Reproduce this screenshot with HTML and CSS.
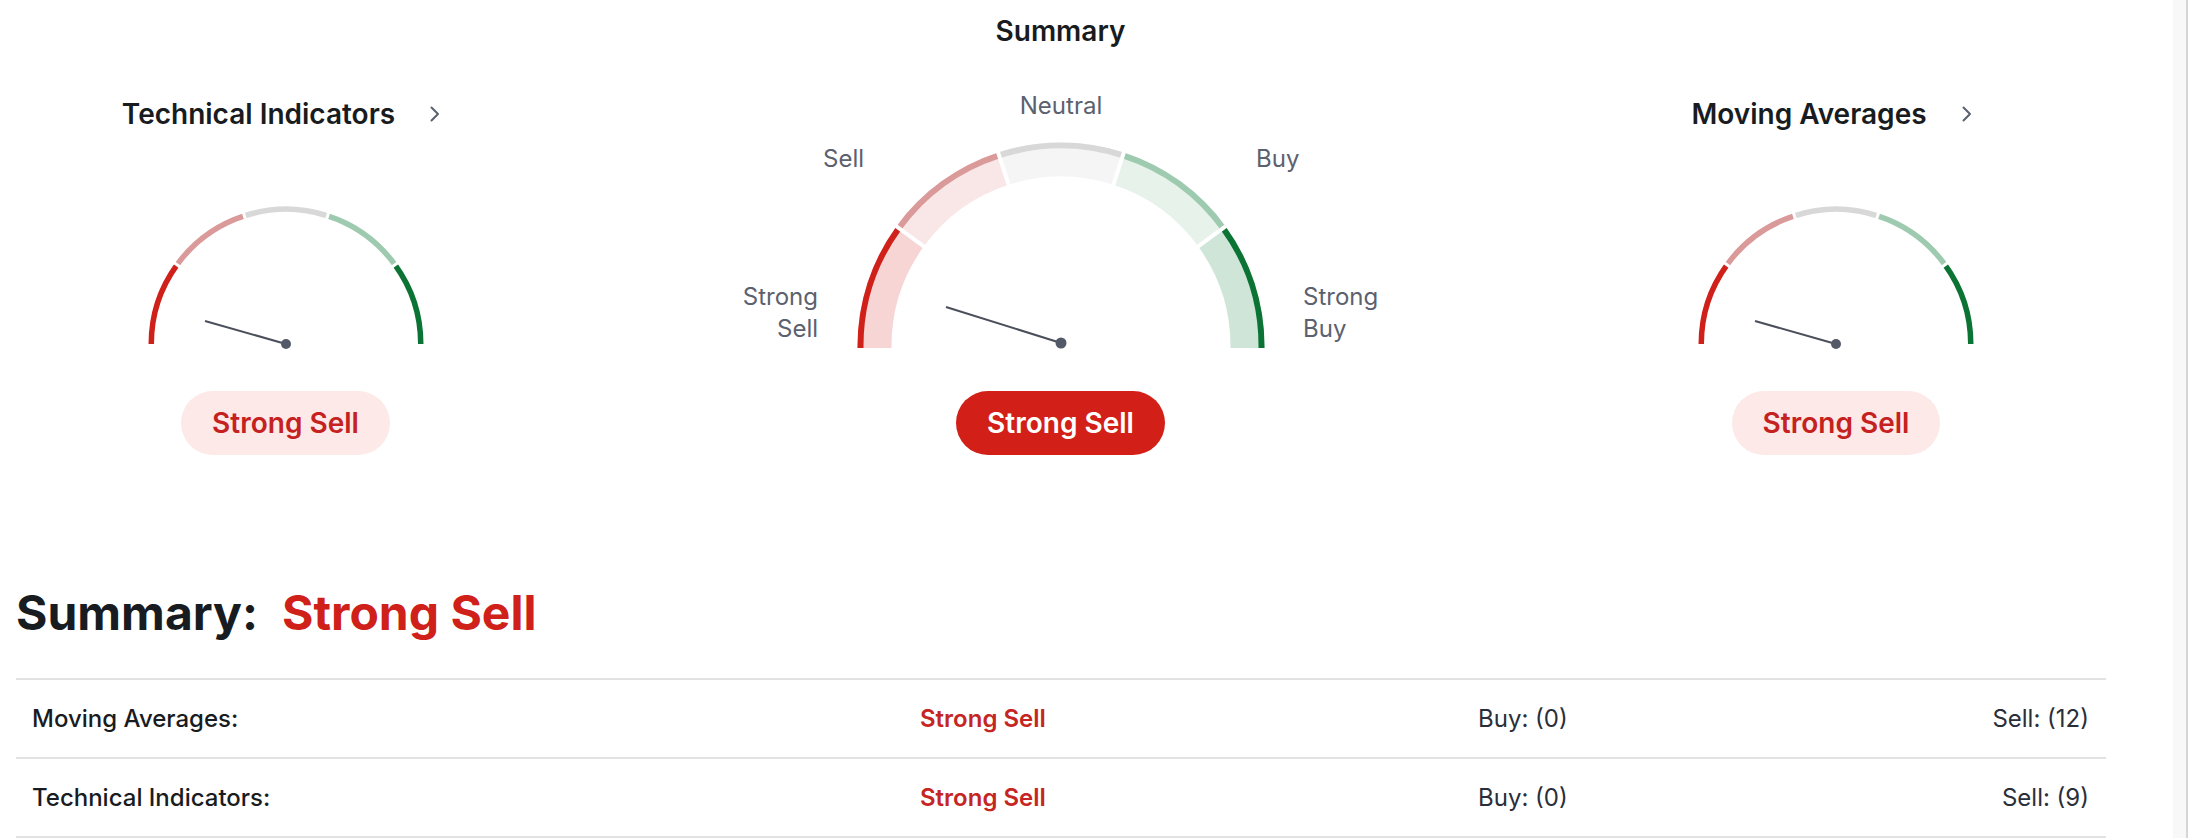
FILE: index.html
```html
<!DOCTYPE html>
<html lang="en">
<head>
  <meta charset="UTF-8">
  <title>Technical Summary</title>
  <link rel="stylesheet" href="styles.css">
</head>
<body>
  <div class="page">
    <section class="gauges">

      <!-- technical indicators -->
      <div class="gauge-card">
        <div class="card-title">
          <span>Technical Indicators</span>
          <svg class="chevron" viewBox="0 0 26 26"><path d="M8.5 6.5 L15 13 L8.5 19.5"/></svg>
        </div>
        <svg class="mini-gauge" viewBox="0 0 290 150">
          <path class="seg s-strong-sell" d="M10.25 142 A134.75 134.75 0 0 1 35.98 62.8"/>
          <path class="seg s-sell" d="M35.98 62.8 A134.75 134.75 0 0 1 103.36 13.84"/>
          <path class="seg s-neutral" d="M103.36 13.84 A134.75 134.75 0 0 1 186.64 13.84"/>
          <path class="seg s-buy" d="M186.64 13.84 A134.75 134.75 0 0 1 254.02 62.8"/>
          <path class="seg s-strong-buy" d="M254.02 62.8 A134.75 134.75 0 0 1 279.75 142"/>
          <g class="gap">
            <line x1="41.45" y1="66.76" x2="30.12" y2="58.53"/>
            <line x1="105.45" y1="20.26" x2="101.12" y2="6.95"/>
            <line x1="184.55" y1="20.26" x2="188.88" y2="6.95"/>
            <line x1="248.55" y1="66.76" x2="259.88" y2="58.53"/>
          </g>
          <line class="needle" x1="145" y1="142" x2="64" y2="119"/>
          <circle class="pivot" cx="145" cy="142" r="5"/>
        </svg>
        <span class="badge badge-soft">Strong Sell</span>
      </div>

      <!-- overall summary -->
      <div class="gauge-card main">
        <div class="main-title">Summary</div>
        <svg class="big-gauge" viewBox="0 0 660 262">
          <g class="band">
            <path class="b-strong-sell" d="M143.5 256 L143.5 254 A186.5 186.5 0 0 1 179.12 144.38"/>
            <path class="b-sell" d="M179.12 144.38 A186.5 186.5 0 0 1 272.37 76.63"/>
            <path class="b-neutral" d="M272.37 76.63 A186.5 186.5 0 0 1 387.63 76.63"/>
            <path class="b-buy" d="M387.63 76.63 A186.5 186.5 0 0 1 480.88 144.38"/>
            <path class="b-strong-buy" d="M480.88 144.38 A186.5 186.5 0 0 1 516.5 254 L516.5 256"/>
          </g>
          <g class="rim">
            <path class="s-strong-sell" d="M129.5 256 L129.5 254 A200.5 200.5 0 0 1 167.79 136.15"/>
            <path class="s-sell" d="M167.79 136.15 A200.5 200.5 0 0 1 268.04 63.31"/>
            <path class="s-neutral" d="M268.04 63.31 A200.5 200.5 0 0 1 391.96 63.31"/>
            <path class="s-buy" d="M391.96 63.31 A200.5 200.5 0 0 1 492.21 136.15"/>
            <path class="s-strong-buy" d="M492.21 136.15 A200.5 200.5 0 0 1 530.5 254 L530.5 256"/>
          </g>
          <g class="gap gap-wide">
            <line x1="196.51" y1="157.01" x2="161.72" y2="131.74"/>
            <line x1="279.01" y1="97.08" x2="265.72" y2="56.18"/>
            <line x1="380.99" y1="97.08" x2="394.28" y2="56.18"/>
            <line x1="463.49" y1="157.01" x2="498.28" y2="131.74"/>
          </g>
          <g class="zone-label">
            <text x="330" y="22" text-anchor="middle">Neutral</text>
            <text x="133" y="75" text-anchor="end">Sell</text>
            <text x="525" y="75">Buy</text>
            <text x="87" y="213" text-anchor="end">Strong</text>
            <text x="87" y="245" text-anchor="end">Sell</text>
            <text x="572" y="213">Strong</text>
            <text x="572" y="245">Buy</text>
          </g>
          <line class="needle" x1="330" y1="251" x2="215" y2="215"/>
          <circle class="pivot" cx="330" cy="251" r="5.5"/>
        </svg>
        <span class="badge badge-solid">Strong Sell</span>
      </div>

      <!-- moving averages -->
      <div class="gauge-card">
        <div class="card-title">
          <span>Moving Averages</span>
          <svg class="chevron" viewBox="0 0 26 26"><path d="M8.5 6.5 L15 13 L8.5 19.5"/></svg>
        </div>
        <svg class="mini-gauge" viewBox="0 0 290 150">
          <path class="seg s-strong-sell" d="M10.25 142 A134.75 134.75 0 0 1 35.98 62.8"/>
          <path class="seg s-sell" d="M35.98 62.8 A134.75 134.75 0 0 1 103.36 13.84"/>
          <path class="seg s-neutral" d="M103.36 13.84 A134.75 134.75 0 0 1 186.64 13.84"/>
          <path class="seg s-buy" d="M186.64 13.84 A134.75 134.75 0 0 1 254.02 62.8"/>
          <path class="seg s-strong-buy" d="M254.02 62.8 A134.75 134.75 0 0 1 279.75 142"/>
          <g class="gap">
            <line x1="41.45" y1="66.76" x2="30.12" y2="58.53"/>
            <line x1="105.45" y1="20.26" x2="101.12" y2="6.95"/>
            <line x1="184.55" y1="20.26" x2="188.88" y2="6.95"/>
            <line x1="248.55" y1="66.76" x2="259.88" y2="58.53"/>
          </g>
          <line class="needle" x1="145" y1="142" x2="64" y2="119"/>
          <circle class="pivot" cx="145" cy="142" r="5"/>
        </svg>
        <span class="badge badge-soft">Strong Sell</span>
      </div>

    </section>

    <h2 class="verdict"><span>Summary:</span><span class="verdict-value">Strong Sell</span></h2>

    <div class="summary-table">
      <div class="summary-row">
        <span class="row-name">Moving Averages:</span>
        <span class="row-signal">Strong Sell</span>
        <span class="row-count">Buy: (0)</span>
        <span class="row-count right">Sell: (12)</span>
      </div>
      <div class="summary-row">
        <span class="row-name">Technical Indicators:</span>
        <span class="row-signal">Strong Sell</span>
        <span class="row-count">Buy: (0)</span>
        <span class="row-count right">Sell: (9)</span>
      </div>
    </div>
  </div>
  <div class="scroll-track"></div>
</body>
</html>
```

FILE: styles.css
```css
* {
  margin: 0;
  padding: 0;
  box-sizing: border-box;
}
html, body {
  height: 100%;
  overflow: hidden;
}
body {
  display: flex;
  font-family: Inter, "Noto Sans", sans-serif;
  color: #181c21;
  background: #fff;
}
.page {
  flex: 1;
  padding: 0 67px 0 16px;
}
.scroll-track {
  width: 15px;
  background: #f8f8f8;
  border-right: 2px solid #d6d6d6;
}

/* gauges row */
.gauges {
  display: grid;
  grid-template-columns: 539px 1011px 1fr;
}
.gauge-card {
  display: flex;
  flex-direction: column;
  align-items: center;
  padding-top: 98px;
}
.gauge-card.main {
  padding-top: 15px;
}
.card-title {
  display: flex;
  align-items: center;
  gap: 28px;
  font-size: 28px;
  line-height: 32px;
  font-weight: 600;
}
.chevron {
  width: 26px;
  height: 26px;
  fill: none;
  stroke: #5b616e;
  stroke-width: 2;
  stroke-linecap: round;
  stroke-linejoin: round;
}
.main-title {
  font-size: 28px;
  line-height: 32px;
  font-weight: 600;
}
.mini-gauge {
  width: 290px;
  height: 150px;
  margin-top: 72px;
}
.big-gauge {
  width: 660px;
  height: 262px;
  margin-top: 45px;
  overflow: visible;
}
.seg {
  fill: none;
  stroke-width: 5.5;
}
.rim path {
  fill: none;
  stroke-width: 6;
}
.band path {
  fill: none;
  stroke-width: 34;
}
.s-strong-sell { stroke: #d0201a; }
.s-sell { stroke: #d99a99; }
.s-neutral { stroke: #d8d8d8; }
.s-buy { stroke: #9ecab0; }
.s-strong-buy { stroke: #0b7333; }
.b-strong-sell { stroke: #f7d5d4; }
.b-sell { stroke: #f9e6e6; }
.b-neutral { stroke: #f5f5f5; }
.b-buy { stroke: #e7f2eb; }
.b-strong-buy { stroke: #cfe5d7; }
.gap line {
  stroke: #fff;
  stroke-width: 3;
}
.gap-wide line {
  stroke-width: 4;
}
.zone-label text {
  font-family: Inter, "Noto Sans", sans-serif;
  font-size: 24px;
  fill: #5b616e;
}
.needle {
  stroke: #4a4f5b;
  stroke-width: 2;
}
.pivot {
  fill: #535968;
}

.badge {
  display: inline-flex;
  align-items: center;
  height: 64px;
  padding: 0 31px;
  border-radius: 32px;
  font-size: 28px;
  font-weight: 600;
}
.mini-gauge + .badge {
  margin-top: 39px;
}
.big-gauge + .badge {
  margin-top: 37px;
}
.badge-soft {
  background: #fce9e8;
  color: #c5221f;
}
.badge-solid {
  background: #d21f18;
  color: #fff;
}

/* summary table */
.verdict {
  margin-top: 130px;
  display: flex;
  align-items: baseline;
  gap: 24px;
  font-size: 48px;
  line-height: 56px;
  font-weight: 700;
}
.verdict-value {
  color: #cf2019;
}
.summary-table {
  margin-top: 37px;
  border-top: 2px solid #e2e2e2;
}
.summary-row {
  display: grid;
  grid-template-columns: 888px 558px 1fr auto;
  align-items: center;
  height: 79px;
  padding: 0 17px 0 16px;
  border-bottom: 2px solid #e2e2e2;
  font-size: 24px;
}
.row-name {
  font-weight: 500;
}
.row-signal {
  color: #c62623;
  font-weight: 600;
}
.row-count {
  color: #2a2e39;
}
.row-count.right {
  text-align: right;
}
```
